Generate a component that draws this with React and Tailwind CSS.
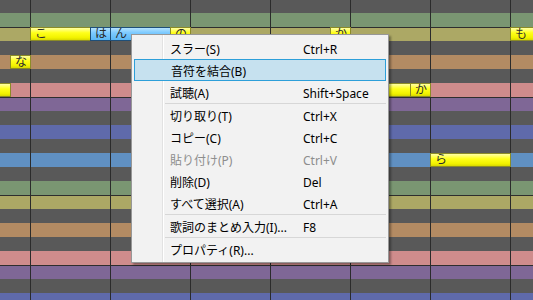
import React from "react";

// piano roll rows, top to bottom (F#, F, E, D#, D, C#, C, B, A#, A, G#, G)
const ROW_COLORS = [
  "bg-[#595959]",
  "bg-[#7a9672]",
  "bg-[#aca865]",
  "bg-[#595959]",
  "bg-[#b38b63]",
  "bg-[#595959]",
  "bg-[#cf8c8c]",
  "bg-[#7f6796]",
  "bg-[#595959]",
  "bg-[#5f6aaa]",
  "bg-[#595959]",
  "bg-[#6090c2]",
];

const LINE_ROWS = [2, 7, 14, 19];

const BARS = [30, 110, 190, 270, 350, 430, 510];

const NOTES = [
  { row: 2, x: 30, w: 60, text: "こ" },
  { row: 2, x: 90, w: 20, text: "は", selected: true },
  { row: 2, x: 110, w: 60, text: "ん", selected: true },
  { row: 2, x: 170, w: 20, text: "の" },
  { row: 2, x: 330, w: 20, text: "か" },
  { row: 2, x: 510, w: 40, text: "も" },
  { row: 4, x: 10, w: 20, text: "な" },
  { row: 6, x: -20, w: 30, text: "" },
  { row: 6, x: 350, w: 60, text: "" },
  { row: 6, x: 410, w: 20, text: "か" },
  { row: 11, x: 430, w: 80, text: "ら" },
];

const MENU = [
  { label: "スラー(S)", shortcut: "Ctrl+R" },
  { label: "音符を結合(B)", active: true },
  { label: "試聴(A)", shortcut: "Shift+Space" },
  { separator: true },
  { label: "切り取り(T)", shortcut: "Ctrl+X" },
  { label: "コピー(C)", shortcut: "Ctrl+C" },
  { label: "貼り付け(P)", shortcut: "Ctrl+V", disabled: true },
  { label: "削除(D)", shortcut: "Del" },
  { label: "すべて選択(A)", shortcut: "Ctrl+A" },
  { separator: true },
  { label: "歌詞のまとめ入力(I)...", shortcut: "F8" },
  { separator: true },
  { label: "プロパティ(R)..." },
];

const Note = ({ note }) => (
  <div
    className={`absolute h-[14px] border flex items-center pl-[4px] text-[12px] leading-[12px] text-[#2a2a2a] whitespace-nowrap ${
      note.selected
        ? "border-[#1f4f78] bg-[linear-gradient(#b4e2ff,#7ccaff_40%,#5cb8f4)]"
        : "border-[#8c8c26] bg-[linear-gradient(#ffffa6,#ffff1a_40%,#f2f200_80%,#d8d800)]"
    }`}
    style={{ left: note.x, top: note.row * 14 - 1, width: note.w + 1 }}
  >
    {note.text}
  </div>
);

const ContextMenu = () => (
  <div className="absolute left-[131px] top-[34px] w-[258px] border border-[#979797] bg-[#f2f2f2] p-[2px] shadow-[2px_2px_2px_rgba(0,0,0,0.35)] text-[12px] text-black">
    <div className="absolute left-[30px] top-0 bottom-0 w-px bg-[#e2e2e2]" />
    <div className="absolute left-[31px] top-0 bottom-0 w-px bg-white" />
    {MENU.map((item, index) =>
      item.separator ? (
        <div key={index} className="relative h-px ml-[31px] bg-[#d7d7d7]" />
      ) : (
        <div
          key={index}
          className={`relative flex items-center h-[22px] pt-[3px] pl-[36px] ${
            item.active ? "border border-[#2d9fd9] bg-[#c6e1ef] pl-[35px]" : ""
          } ${item.disabled ? "text-[#8d8d8d]" : ""}`}
        >
          <div className="w-[133px] whitespace-nowrap">{item.label}</div>
          {item.shortcut && (
            <div className="whitespace-nowrap">{item.shortcut}</div>
          )}
        </div>
      )
    )}
  </div>
);

export default function App() {
  const rows = Array.from({ length: 22 }, (_, i) => i);

  return (
    <div className="relative w-[533px] h-[300px] overflow-hidden bg-[#595959] font-['Noto_Sans','Noto_Sans_CJK_JP',sans-serif]">
      <div className="flex flex-col -mt-px">
        {rows.map((i) => (
          <div
            key={i}
            className={`h-[14px] shrink-0 ${ROW_COLORS[i % 12]} ${
              LINE_ROWS.includes(i) ? "shadow-[inset_0_1px_0_#2e2e2e]" : ""
            }`}
          />
        ))}
      </div>

      {BARS.map((x) => (
        <div
          key={x}
          className="absolute top-0 bottom-0 w-px bg-[#2b2b2b]"
          style={{ left: x }}
        />
      ))}

      {NOTES.map((note, index) => (
        <Note key={index} note={note} />
      ))}

      <ContextMenu />
    </div>
  );
}
